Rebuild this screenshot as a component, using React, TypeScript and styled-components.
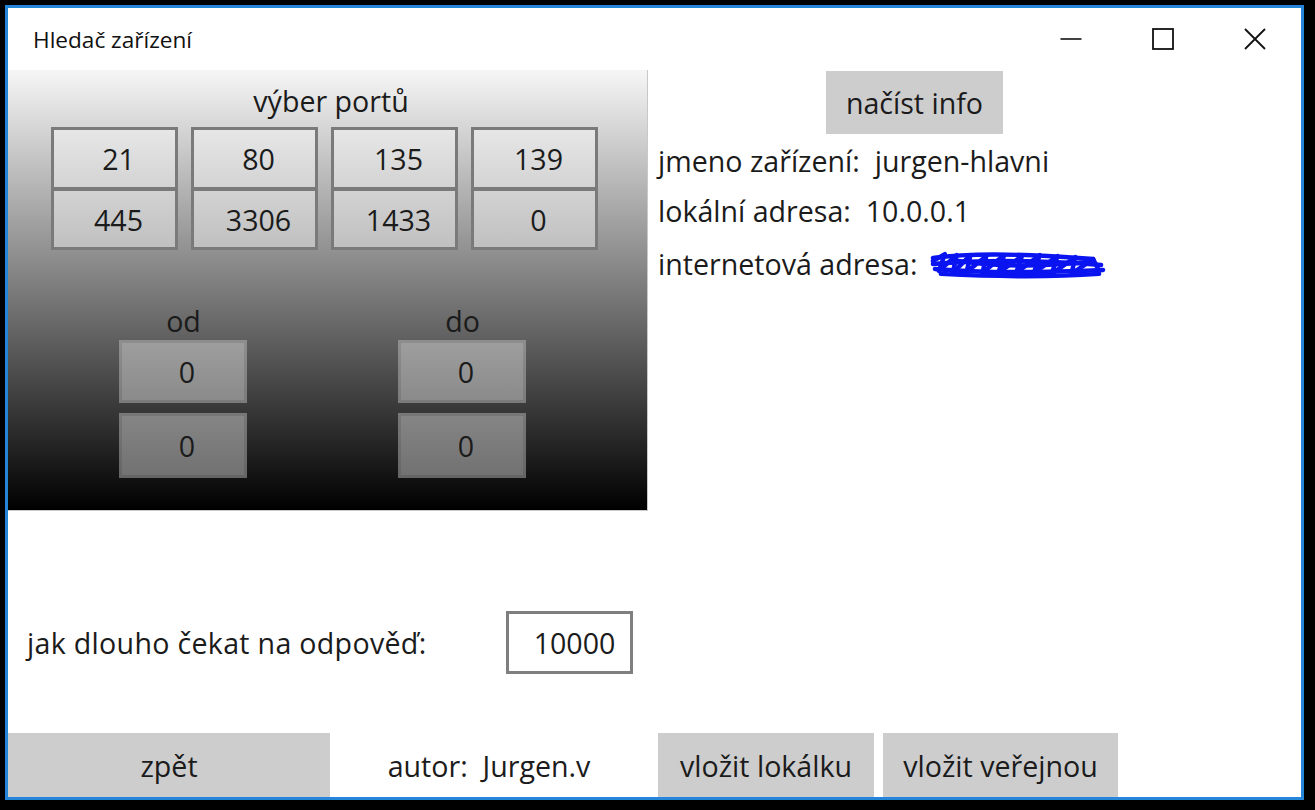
import React from "react";
import styled, { createGlobalStyle } from "styled-components";

const GlobalStyle = createGlobalStyle`
  html, body {
    margin: 0;
    padding: 0;
    background: #000;
  }
  body {
    font-family: "Open Sans", "Noto Sans", sans-serif;
    color: #1b1b1b;
  }
  * { box-sizing: border-box; }
`;

const TEXT = "28.6px";

const Screen = styled.div`
  width: 1315px;
  height: 810px;
  background: #000;
  padding: 5px 11px 10px 5px;
`;

const Window = styled.div`
  width: 1299px;
  height: 795px;
  border: 3px solid #2585d8;
  background: #fff;
  display: flex;
  flex-direction: column;
`;

const TitleBar = styled.div`
  height: 62px;
  display: flex;
  align-items: center;
  flex-shrink: 0;
`;

const Title = styled.div`
  flex: 1;
  padding-left: 25px;
  font-size: 22.6px;
  color: #111;
`;

const CaptionButton = styled.div`
  width: 92px;
  height: 62px;
  display: flex;
  align-items: center;
  justify-content: center;
`;

const Body = styled.div`
  flex: 1;
  display: grid;
  grid-template-columns: 640px 1fr;
  grid-template-rows: 441px 100px 63px 59px 64px;
`;

const PortPanel = styled.div`
  grid-column: 1;
  grid-row: 1;
  background: linear-gradient(to bottom, #f6f6f6 0%, #000 100%);
  border-right: 1px solid #c8c8c8;
  border-bottom: 1px solid #c8c8c8;
  display: flex;
  flex-direction: column;
`;

const PanelHeading = styled.div`
  margin-top: 15px;
  height: 32px;
  line-height: 32px;
  text-align: center;
  padding-left: 7px;
  font-size: ${TEXT};
`;

const PortGrid = styled.div`
  margin: 10px 0 0 43px;
  display: grid;
  grid-template-columns: repeat(4, 127px);
  column-gap: 13px;
`;

const PortColumn = styled.div`
  display: flex;
  flex-direction: column;
`;

const PortBox = styled.div<{ $lower?: boolean }>`
  height: ${(p) => (p.$lower ? 62 : 63)}px;
  margin-top: ${(p) => (p.$lower ? -2 : 0)}px;
  border: 3px solid #7a7a7a;
  background: rgba(255, 255, 255, 0.42);
  display: flex;
  align-items: center;
  justify-content: center;
  padding-left: 8px;
  font-size: ${TEXT};
`;

const RangeRow = styled.div`
  margin: 55px 0 0 111px;
  display: flex;
  gap: 151px;
`;

const RangeColumn = styled.div`
  width: 128px;
  display: flex;
  flex-direction: column;
  gap: 10px;
`;

const RangeLabel = styled.div`
  height: 32px;
  line-height: 32px;
  margin-bottom: -7px;
  text-align: center;
  padding-left: 1px;
  font-size: ${TEXT};
`;

const RangeBox = styled.div<{ $h: number }>`
  height: ${(p) => p.$h}px;
  border: 3px solid rgba(0, 0, 0, 0.1);
  background: rgba(255, 255, 255, 0.4);
  display: flex;
  align-items: center;
  justify-content: center;
  padding-left: 8px;
  font-size: ${TEXT};
`;

const InfoColumn = styled.div`
  grid-column: 2;
  grid-row: 1;
  padding-left: 10px;
  display: flex;
  flex-direction: column;
  align-items: flex-start;
`;

const GrayButton = styled.div<{ $w: number }>`
  width: ${(p) => p.$w}px;
  height: 100%;
  background: #cdcdcd;
  display: flex;
  align-items: center;
  justify-content: center;
  font-size: ${TEXT};
`;

const LoadButton = styled(GrayButton)`
  height: 63px;
  margin: 1px 0 0 168px;
`;

const InfoLine = styled.div<{ $shift?: number }>`
  height: 50px;
  line-height: 50px;
  margin-top: ${(p) => p.$shift ?? 0}px;
  font-size: ${TEXT};
  display: flex;
  align-items: center;
  white-space: pre;
`;

const Redacted = styled.span`
  display: inline-flex;
  margin-left: 4px;
`;

const TimeoutRow = styled.div`
  grid-column: 1;
  grid-row: 3;
  display: flex;
  align-items: center;
  padding-left: 19px;
`;

const TimeoutLabel = styled.div`
  width: 479px;
  font-size: ${TEXT};
  letter-spacing: 0.3px;
`;

const TimeoutBox = styled.div`
  width: 127px;
  height: 63px;
  border: 3px solid #7f7f7f;
  background: #fff;
  display: flex;
  align-items: center;
  justify-content: center;
  padding-left: 10px;
  font-size: ${TEXT};
`;

const BottomBar = styled.div`
  grid-column: 1 / span 2;
  grid-row: 5;
  display: flex;
  align-items: stretch;
`;

const Author = styled.div`
  width: 318px;
  display: flex;
  align-items: center;
  justify-content: center;
  font-size: ${TEXT};
  white-space: pre;
`;

const ActionGroup = styled.div`
  padding-left: 10px;
  display: flex;
  gap: 9px;
`;

const MinimizeIcon = () => (
  <svg width="22" height="22" viewBox="0 0 22 22">
    <line x1="0.5" y1="11" x2="21.5" y2="11" stroke="#111" strokeWidth="1.6" />
  </svg>
);

const MaximizeIcon = () => (
  <svg width="22" height="22" viewBox="0 0 22 22">
    <rect x="1" y="1" width="20" height="20" fill="none" stroke="#111" strokeWidth="1.8" />
  </svg>
);

const CloseIcon = () => (
  <svg width="22" height="22" viewBox="0 0 22 22">
    <path d="M1 1 L21 21 M21 1 L1 21" stroke="#111" strokeWidth="1.8" />
  </svg>
);

// blue marker strokes covering the public address
const Scribble = () => (
  <svg width="178" height="30" viewBox="0 0 180 30">
    <g fill="none" stroke="#0a14f0" strokeWidth="4.5" strokeLinecap="round" strokeLinejoin="round">
      <path d="M4 12 L16 5 L10 22 L28 6 L24 24 L42 6 L38 23 L58 7 L54 24 L76 6 L70 24 L94 7 L88 24 L112 6 L106 24 L130 7 L124 25 L148 8 L144 25 L166 10 L172 22" />
      <path d="M4 9 C40 4 90 4 166 10" />
      <path d="M4 15 C50 11 110 11 174 16" />
      <path d="M6 20 C50 24 110 24 176 21" />
      <path d="M12 25 C70 28 130 28 172 25" />
      <path d="M30 12 C70 18 110 18 160 13" />
    </g>
  </svg>
);

const ports = [
  ["21", "445"],
  ["80", "3306"],
  ["135", "1433"],
  ["139", "0"],
];

export default function App() {
  return (
    <>
      <GlobalStyle />
      <Screen>
        <Window>
          <TitleBar>
            <Title>Hledač zařízení</Title>
            <CaptionButton>
              <MinimizeIcon />
            </CaptionButton>
            <CaptionButton>
              <MaximizeIcon />
            </CaptionButton>
            <CaptionButton>
              <CloseIcon />
            </CaptionButton>
          </TitleBar>
          <Body>
            <PortPanel>
              <PanelHeading>výber portů</PanelHeading>
              <PortGrid>
                {ports.map(([a, b]) => (
                  <PortColumn key={a}>
                    <PortBox>{a}</PortBox>
                    <PortBox $lower>{b}</PortBox>
                  </PortColumn>
                ))}
              </PortGrid>
              <RangeRow>
                <RangeColumn>
                  <RangeLabel>od</RangeLabel>
                  <RangeBox $h={63}>0</RangeBox>
                  <RangeBox $h={65}>0</RangeBox>
                </RangeColumn>
                <RangeColumn>
                  <RangeLabel>do</RangeLabel>
                  <RangeBox $h={63}>0</RangeBox>
                  <RangeBox $h={65}>0</RangeBox>
                </RangeColumn>
              </RangeRow>
            </PortPanel>
            <InfoColumn>
              <LoadButton $w={177}>načíst info</LoadButton>
              <InfoLine $shift={2}>{"jmeno zařízení:  jurgen-hlavni"}</InfoLine>
              <InfoLine>{"lokální adresa:  10.0.0.1"}</InfoLine>
              <InfoLine $shift={3}>
                {"internetová adresa: "}
                <Redacted>
                  <Scribble />
                </Redacted>
              </InfoLine>
            </InfoColumn>
            <TimeoutRow>
              <TimeoutLabel>jak dlouho čekat na odpověď:</TimeoutLabel>
              <TimeoutBox>10000</TimeoutBox>
            </TimeoutRow>
            <BottomBar>
              <GrayButton $w={322}>zpět</GrayButton>
              <Author>{"autor:  Jurgen.v"}</Author>
              <ActionGroup>
                <GrayButton $w={216}>vložit lokálku</GrayButton>
                <GrayButton $w={235}>vložit veřejnou</GrayButton>
              </ActionGroup>
            </BottomBar>
          </Body>
        </Window>
      </Screen>
    </>
  );
}
